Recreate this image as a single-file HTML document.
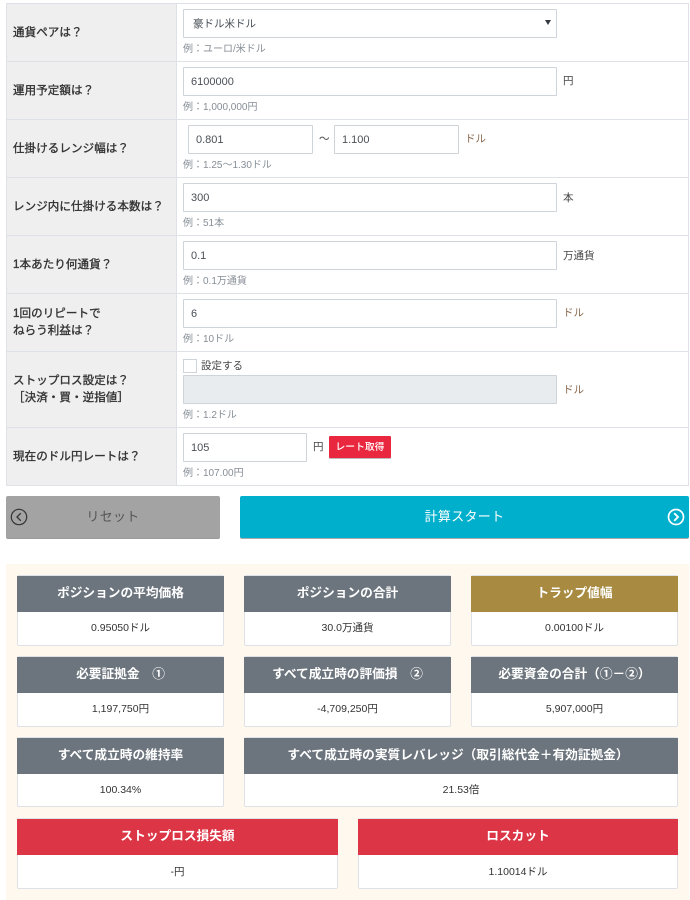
<!DOCTYPE html>
<html lang="ja"><head><meta charset="utf-8"><style>
html,body{margin:0;padding:0;background:#fff}
body{width:690px;height:900px;position:relative;overflow:hidden;font-family:"Liberation Sans","Noto Sans CJK JP",sans-serif;color:#333}
div{position:absolute;box-sizing:border-box;white-space:nowrap}
.lc{left:6px;width:171px;background:#efefef;border:1px solid #dee2e6}
.rc{left:176px;width:513px;background:#fff;border:1px solid #dee2e6}
.l{left:13px;font-size:11.5px;line-height:17px;color:#333;letter-spacing:.1px;font-weight:normal;-webkit-text-stroke:.35px #333;margin-top:1px}
.i{left:183px;width:374px;height:29px;background:#fff;border:1px solid #ced4da;border-radius:1px;font-size:11px;line-height:29px;padding-left:7px;color:#495057}
.u{font-size:10.5px;line-height:14px;color:#444}
.h{font-size:10px;line-height:14px;color:#868e96;left:183px;margin-top:2px}
.card{background:#fff;border:1px solid #dee2e6;border-radius:2px}
.head{left:-1px;right:-1px;top:0;height:36px;background:#6c757d;color:#fff;font-weight:bold;font-size:12.7px;line-height:35px;text-align:center}
.val{left:0;right:0;text-align:center;font-size:10.5px;color:#333;line-height:14px}
</style></head><body>
<div class="lc" style="top:3px;height:59px"></div><div class="rc" style="top:3px;height:59px"></div>
<div class="lc" style="top:61px;height:59px"></div><div class="rc" style="top:61px;height:59px"></div>
<div class="lc" style="top:119px;height:59px"></div><div class="rc" style="top:119px;height:59px"></div>
<div class="lc" style="top:177px;height:59px"></div><div class="rc" style="top:177px;height:59px"></div>
<div class="lc" style="top:235px;height:59px"></div><div class="rc" style="top:235px;height:59px"></div>
<div class="lc" style="top:293px;height:59px"></div><div class="rc" style="top:293px;height:59px"></div>
<div class="lc" style="top:351px;height:77px"></div><div class="rc" style="top:351px;height:77px"></div>
<div class="lc" style="top:427px;height:59px"></div><div class="rc" style="top:427px;height:59px"></div>

<div class="l" style="top:24px">通貨ペアは？</div>
<div class="i" style="top:9px;padding-left:9px;font-size:10.5px">豪ドル米ドル</div>
<div style="left:545px;top:20px;width:0;height:0;border-left:3px solid transparent;border-right:3px solid transparent;border-top:5px solid #343a40"></div>
<div class="h" style="top:41px">例：ユーロ/米ドル</div>

<div class="l" style="top:82px">運用予定額は？</div>
<div class="i" style="top:67px">6100000</div>
<div class="u" style="left:563px;top:74px">円</div>
<div class="h" style="top:99px">例：1,000,000円</div>

<div class="l" style="top:140px">仕掛けるレンジ幅は？</div>
<div class="i" style="top:125px;left:188px;width:125px">0.801</div>
<div class="u" style="left:319px;top:132px">～</div>
<div class="i" style="top:125px;left:334px;width:125px">1.100</div>
<div class="u" style="left:465px;top:132px;color:#8a6a50">ドル</div>
<div class="h" style="top:157px">例：1.25～1.30ドル</div>

<div class="l" style="top:198px">レンジ内に仕掛ける本数は？</div>
<div class="i" style="top:183px">300</div>
<div class="u" style="left:563px;top:191px">本</div>
<div class="h" style="top:215px">例：51本</div>

<div class="l" style="top:256px">1本あたり何通貨？</div>
<div class="i" style="top:241px">0.1</div>
<div class="u" style="left:563px;top:249px">万通貨</div>
<div class="h" style="top:273px">例：0.1万通貨</div>

<div class="l" style="top:305px">1回のリピートで</div>
<div class="l" style="top:322px">ねらう利益は？</div>
<div class="i" style="top:299px">6</div>
<div class="u" style="left:563px;top:306px;color:#8a6a50">ドル</div>
<div class="h" style="top:331px">例：10ドル</div>

<div class="l" style="top:372px">ストップロス設定は？</div>
<div class="l" style="top:389px">［決済・買・逆指値］</div>
<div style="left:183px;top:359px;width:14px;height:14px;border:1px solid #ced4da;background:#fff"></div>
<div class="u" style="left:201px;top:359px">設定する</div>
<div class="i" style="top:375px;background:#e9ecef"></div>
<div class="u" style="left:563px;top:383px;color:#8a6a50">ドル</div>
<div class="h" style="top:407px">例：1.2ドル</div>

<div class="l" style="top:448px">現在のドル円レートは？</div>
<div class="i" style="top:433px;width:124px">105</div>
<div class="u" style="left:313px;top:440px">円</div>
<div style="left:329px;top:436px;width:62px;height:22px;background:#e9283f;border-radius:1px;color:#fff;font-size:9.8px;font-weight:500;line-height:23px;text-align:center;box-shadow:0 1px 0 #bbb">レート取得</div>
<div class="h" style="top:465px">例：107.00円</div>

<div style="left:6px;top:496px;width:214px;height:42px;background:#a3a3a3;border-radius:2px;box-shadow:0 1px 0 #999;color:#555;font-size:13px;line-height:42px;text-align:center;letter-spacing:.3px">リセット</div>
<svg style="position:absolute;left:10px;top:508px" width="18" height="18" viewBox="0 0 18 18"><circle cx="9" cy="9" r="7.7" fill="none" stroke="#333" stroke-width="1.2"/><path d="M10.8 5.2L7 9l3.8 3.8" fill="none" stroke="#333" stroke-width="1.3"/></svg>
<div style="left:240px;top:496px;width:449px;height:42px;background:#00afcc;border-radius:2px;box-shadow:0 1px 0 #aaa;color:#fff;font-size:13px;line-height:42px;text-align:center;letter-spacing:.3px">計算スタート</div>
<svg style="position:absolute;left:667px;top:508px" width="18" height="18" viewBox="0 0 18 18"><circle cx="9" cy="9" r="7.5" fill="none" stroke="#fff" stroke-width="1.7"/><path d="M7.2 5.2L11 9l-3.8 3.8" fill="none" stroke="#fff" stroke-width="1.9"/></svg>

<div style="left:6px;top:564px;width:683px;height:336px;background:#fff8ee"></div>

<div class="card" style="left:17px;top:575px;width:207px;height:71px"><div class="head">ポジションの平均価格</div><div class="val" style="top:45px">0.95050ドル</div></div>
<div class="card" style="left:244px;top:575px;width:207px;height:71px"><div class="head">ポジションの合計</div><div class="val" style="top:45px">30.0万通貨</div></div>
<div class="card" style="left:471px;top:575px;width:207px;height:71px"><div class="head" style="background:#a88b41">トラップ値幅</div><div class="val" style="top:45px">0.00100ドル</div></div>

<div class="card" style="left:17px;top:656px;width:207px;height:71px"><div class="head">必要証拠金　①</div><div class="val" style="top:45px">1,197,750円</div></div>
<div class="card" style="left:244px;top:656px;width:207px;height:71px"><div class="head">すべて成立時の評価損　②</div><div class="val" style="top:45px">-4,709,250円</div></div>
<div class="card" style="left:471px;top:656px;width:207px;height:71px"><div class="head">必要資金の合計（①－②）</div><div class="val" style="top:45px">5,907,000円</div></div>

<div class="card" style="left:17px;top:737px;width:207px;height:70px"><div class="head">すべて成立時の維持率</div><div class="val" style="top:45px">100.34%</div></div>
<div class="card" style="left:244px;top:737px;width:434px;height:70px"><div class="head" style="padding-right:6px">すべて成立時の実質レバレッジ（取引総代金＋有効証拠金）</div><div class="val" style="top:45px">21.53倍</div></div>

<div class="card" style="left:17px;top:818px;width:321px;height:71px"><div class="head" style="background:#dc3545">ストップロス損失額</div><div class="val" style="top:46px">-円</div></div>
<div class="card" style="left:358px;top:818px;width:320px;height:71px"><div class="head" style="background:#dc3545">ロスカット</div><div class="val" style="top:46px">1.10014ドル</div></div>
</body></html>
